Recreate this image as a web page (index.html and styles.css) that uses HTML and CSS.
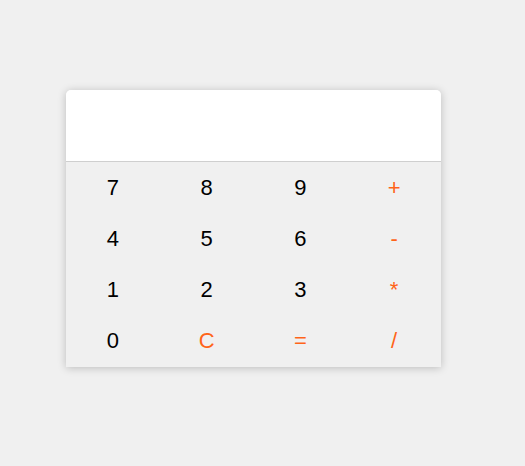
FILE: index.html
```html
<!DOCTYPE html>
<html>
<head>
<meta charset="utf-8">
<link rel="stylesheet" href="styles.css">
</head>
<body>
<div class="calc">
  <div class="display"></div>
  <div class="keys">
    <div class="key">7</div><div class="key">8</div><div class="key">9</div><div class="key op">+</div>
    <div class="key">4</div><div class="key">5</div><div class="key">6</div><div class="key op">-</div>
    <div class="key">1</div><div class="key">2</div><div class="key">3</div><div class="key op">*</div>
    <div class="key">0</div><div class="key op">C</div><div class="key op">=</div><div class="key op">/</div>
  </div>
</div>
</body>
</html>
```
FILE: styles.css
```css
html, body {
  margin: 0;
  background: #f0f0f0;
}
body {
  min-height: 100vh;
  box-sizing: border-box;
  padding: 90px 0 0 66px;
  font-family: "Liberation Sans", Arial, sans-serif;
}
.calc {
  width: 375px;
  border-radius: 5px 5px 0 0;
  box-shadow: 0 1px 8px rgba(0, 0, 0, 0.22);
  background: #f0f0f0;
}
.display {
  height: 71px;
  background: #fff;
  border-radius: 5px 5px 0 0;
  border-bottom: 1px solid #cfcfcf;
}
.keys {
  display: grid;
  grid-template-columns: repeat(4, 1fr);
  grid-auto-rows: 51.25px;
}
.key {
  display: flex;
  align-items: center;
  justify-content: center;
  font-size: 22px;
  color: #000;
}
.key.op {
  color: #ff6419;
}
```
